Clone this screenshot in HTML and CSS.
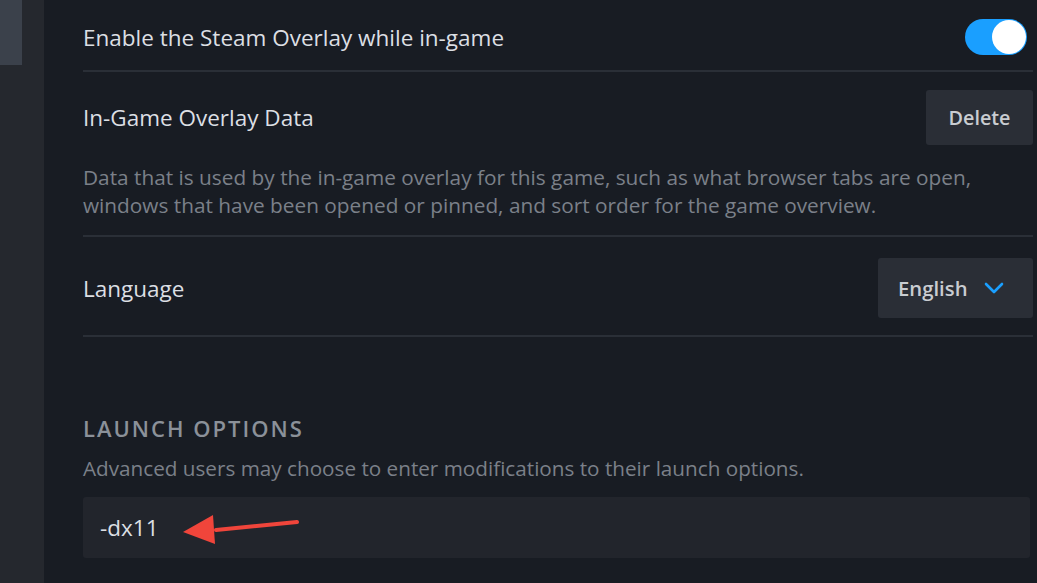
FILE: index.html
```html
<!DOCTYPE html>
<html>
<head>
<meta charset="utf-8">
<link rel="stylesheet" href="styles.css">
</head>
<body>
<div class="app">
  <aside class="sidebar"><div class="side-tab"></div></aside>
  <main class="content">
    <div class="row row-toggle">
      <span class="label">Enable the Steam Overlay while in-game</span>
      <span class="toggle"><span class="knob"></span></span>
    </div>
    <div class="row row-data">
      <div class="row-head">
        <span class="label">In-Game Overlay Data</span>
        <button class="btn">Delete</button>
      </div>
      <p class="desc">Data that is used by the in-game overlay for this game, such as what browser tabs are open, windows that have been opened or pinned, and sort order for the game overview.</p>
    </div>
    <div class="row row-lang">
      <span class="label">Language</span>
      <div class="dropdown">
        <span>English</span>
        <svg class="chev" width="20" height="12" viewBox="0 0 20 12"><path d="M2 2 L10 10 L18 2" fill="none" stroke="#1a9fff" stroke-width="2.6" stroke-linecap="round" stroke-linejoin="round"/></svg>
      </div>
    </div>
    <section class="launch">
      <h2 class="section-title">LAUNCH OPTIONS</h2>
      <p class="hint">Advanced users may choose to enter modifications to their launch options.</p>
      <div class="input-wrap">
        <div class="input">-dx11</div>
        <svg class="arrow" width="140" height="50" viewBox="0 0 140 50"><line x1="131" y1="12" x2="50" y2="20" stroke="#f0453b" stroke-width="4" stroke-linecap="round"/><polygon points="17,22 47,5 49,34" fill="#f0453b"/></svg>
      </div>
    </section>
  </main>
</div>
</body>
</html>
```

FILE: styles.css
```css
* { box-sizing: border-box; }
html, body { margin: 0; padding: 0; }
body {
  width: 1037px;
  height: 583px;
  overflow: hidden;
  background: #181c23;
  font-family: "Open Sans", "Liberation Sans", sans-serif;
}
.app { display: flex; height: 583px; }
.sidebar {
  width: 44px;
  flex: none;
  background: #25282e;
}
.side-tab {
  width: 22px;
  height: 65px;
  background: #3b414b;
}
.content {
  flex: 1;
  padding: 0 4px 0 39px;
}
.row { border-bottom: 2px solid #2a2f37; }
.label {
  color: #dcdfe3;
  font-size: 22.5px;
}
.row-toggle {
  height: 72px;
  display: flex;
  align-items: center;
  justify-content: space-between;
  padding: 4px 6px 0 0;
}
.toggle {
  width: 62px;
  height: 36px;
  border-radius: 18px;
  background: #1a9fff;
  position: relative;
  display: block;
}
.knob {
  position: absolute;
  right: 1px;
  top: 1px;
  width: 34px;
  height: 34px;
  border-radius: 50%;
  background: #fff;
}
.row-data { padding: 18px 0 16px; }
.row-head {
  display: flex;
  align-items: center;
  justify-content: space-between;
}
.btn {
  width: 107px;
  height: 55px;
  border: none;
  border-radius: 3px;
  background: #2a2e36;
  color: #c9ccd1;
  font-family: inherit;
  font-size: 19.8px;
  font-weight: 600;
}
.desc {
  margin: 18px 0 0;
  color: #7b8089;
  font-size: 20.8px;
  line-height: 28px;
}
.row-lang {
  height: 100px;
  display: flex;
  align-items: center;
  justify-content: space-between;
  padding: 4px 0 0;
}
.dropdown {
  width: 155px;
  height: 60px;
  border-radius: 3px;
  background: #2a2e36;
  display: flex;
  align-items: center;
  padding-left: 20px;
  gap: 16px;
  color: #c9ccd1;
  font-size: 20.3px;
  font-weight: 600;
}
.launch { padding-top: 77px; }
.section-title {
  margin: 0;
  color: #8b9199;
  font-size: 22px;
  font-weight: 600;
  letter-spacing: 2px;
  line-height: 28px;
}
.hint {
  margin: 12px 0 0;
  color: #7b8089;
  font-size: 20.7px;
  line-height: 28px;
}
.input-wrap {
  position: relative;
  margin-top: 15px;
  margin-right: 3px;
}
.input {
  height: 61px;
  border-radius: 3px;
  background: #22252c;
  color: #dcdfe3;
  font-size: 22.5px;
  display: flex;
  align-items: center;
  padding-left: 17px;
}
.arrow {
  position: absolute;
  left: 83px;
  top: 13px;
}
```
